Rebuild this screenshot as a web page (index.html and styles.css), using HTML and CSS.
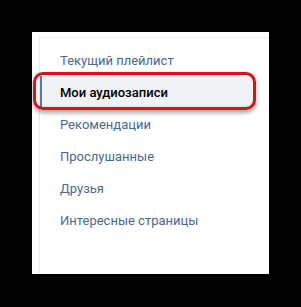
FILE: index.html
```html
<!DOCTYPE html>
<html lang="ru">
<head>
  <meta charset="UTF-8">
  <title>Аудиозаписи</title>
  <link rel="stylesheet" href="styles.css">
</head>
<body>
  <div class="panel">
    <div class="menu">
      <a class="item" href="#">Текущий плейлист</a>
      <a class="item active" href="#">Мои аудиозаписи<span class="mark"></span></a>
      <a class="item" href="#">Рекомендации</a>
      <a class="item" href="#">Прослушанные</a>
      <a class="item" href="#">Друзья</a>
      <a class="item" href="#">Интересные страницы</a>
    </div>
  </div>
</body>
</html>
```

FILE: styles.css
```css
* {
  margin: 0;
  padding: 0;
  box-sizing: border-box;
}

body {
  background: #000;
  font-family: Roboto, 'Open Sans', sans-serif;
}

.panel {
  width: 237px;
  height: 242px;
  margin: 32px 0 0 32px;
  background: #fff;
  padding: 5px 0 0 7px;
}

.menu {
  height: 100%;
  border-left: 1px solid #e7e8ec;
  border-top: 1px solid #eceef1;
  padding-top: 6px;
  display: flex;
  flex-direction: column;
}

.item {
  position: relative;
  display: flex;
  align-items: center;
  height: 32px;
  padding-left: 20px;
  margin-right: 17px;
  font-size: 13px;
  color: #4a6990;
  text-decoration: none;
}

.item.active {
  background: #f0f2f5;
  border-left: 2px solid #5e7a99;
  padding-left: 18px;
  color: #000;
  font-weight: 500;
}

.mark {
  position: absolute;
  left: -9px;
  right: -4px;
  top: -4px;
  bottom: -2px;
  border: 3px solid #d8121b;
  border-radius: 10px;
  box-shadow: 0 3px 4px rgba(0, 0, 0, .35), inset 0 0 2px rgba(0, 0, 0, .2);
}
```
